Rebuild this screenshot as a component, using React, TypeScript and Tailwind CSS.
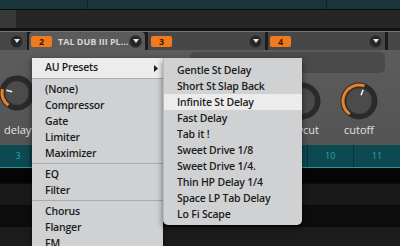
import React from "react";

const menuFont = { fontFamily: '"Open Sans", "DejaVu Sans", sans-serif' };

function DropCircle() {
  return (
    <div className="w-[11px] h-[11px] shrink-0 rounded-full bg-[#262626] flex items-center justify-center shadow-[0_0_0_1px_#3c3c3c]">
      <svg width="6" height="4" viewBox="0 0 6 4">
        <path d="M0 0 L6 0 L3 4 Z" fill="#e8e8e8" />
      </svg>
    </div>
  );
}

function Badge({ n }: { n: string }) {
  return (
    <div className="w-[21px] h-[11px] shrink-0 rounded-[2px] bg-[#f27a1c] flex items-center justify-center text-[9px] font-bold text-[#3b1800] leading-none">
      {n}
    </div>
  );
}

function Knob({
  size,
  arcFrom,
  arcTo,
  pointer,
}: {
  size: number;
  arcFrom: number;
  arcTo: number;
  pointer: number;
}) {
  const c = size / 2;
  const r = c - 3;
  const pt = (a: number, rr: number) => {
    const rad = ((a - 90) * Math.PI) / 180;
    return [c + rr * Math.cos(rad), c + rr * Math.sin(rad)];
  };
  const [x1, y1] = pt(arcFrom, r);
  const [x2, y2] = pt(arcTo, r);
  const large = (arcTo - arcFrom + 360) % 360 > 180 ? 1 : 0;
  const [px1, py1] = pt(pointer, r - 10);
  const [px2, py2] = pt(pointer, r - 4);
  return (
    <svg width={size} height={size} viewBox={`0 0 ${size} ${size}`}>
      <circle cx={c} cy={c} r={c - 0.5} fill="#2a2a2a" />
      <circle cx={c} cy={c} r={r - 3} fill="#4b4b4b" />
      <circle cx={c} cy={c} r={r - 3} fill="none" stroke="#3a3a3a" strokeWidth="1" />
      <path
        d={`M${x1} ${y1} A${r} ${r} 0 ${large} 1 ${x2} ${y2}`}
        fill="none"
        stroke="#e8822a"
        strokeWidth="3"
      />
      <line x1={px1} y1={py1} x2={px2} y2={py2} stroke="#f2f2f2" strokeWidth="1.5" />
    </svg>
  );
}

const mainItems: (string | null)[] = [
  "(None)",
  "Compressor",
  "Gate",
  "Limiter",
  "Maximizer",
  null,
  "EQ",
  "Filter",
  null,
  "Chorus",
  "Flanger",
  "FM",
];

const presets = [
  "Gentle St Delay",
  "Short St Slap Back",
  "Infinite St Delay",
  "Fast Delay",
  "Tab it !",
  "Sweet Drive 1/8",
  "Sweet Drive 1/4.",
  "Thin HP Delay 1/4",
  "Space LP Tab Delay",
  "Lo Fi Scape",
];

export default function App() {
  return (
    <div
      className="relative w-[400px] h-[246px] overflow-hidden bg-[#0a0a0a] flex flex-col"
      style={{ fontFamily: '"Open Sans", "Liberation Sans", sans-serif' }}
    >
      {/* top teal strip */}
      <div className="h-[9px] flex bg-[#17353a]">
        <div className="w-[88px] border-r border-[#0f2428]" />
        <div className="w-[239px] border-r border-[#0f2428]" />
        <div className="flex-1" />
      </div>
      <div className="h-[1px] bg-[#0b0b0b]" />
      <div className="h-[18px] flex">
        <div className="w-[16px] bg-[#383838]" />
        <div className="flex-1 bg-[#272625]" />
      </div>
      <div className="h-[3px] bg-[#111]" />
      <div className="h-[1px] bg-[#747474]" />

      {/* slot tabs */}
      <div className="h-[18px] flex bg-[#1b1b1b]">
        <div className="w-[27px] bg-[#474747] flex items-center justify-end pr-[5px]">
          <DropCircle />
        </div>
        <div className="w-[2px]" />
        <div className="w-[116px] bg-[#5b5b5b] rounded-t-[4px] flex items-center pl-[2px] pr-[4px]">
          <Badge n="2" />
          <span className="ml-[6px] text-[9px] font-bold text-[#d6d6d6] whitespace-nowrap flex-1 leading-none">
            TAL DUB III PL...
          </span>
          <DropCircle />
        </div>
        <div className="w-[3px]" />
        <div className="w-[117px] bg-[#474747] flex items-center pl-[3px] pr-[4px] justify-between">
          <Badge n="3" />
          <DropCircle />
        </div>
        <div className="w-[3px]" />
        <div className="w-[117px] bg-[#474747] flex items-center pl-[2px] pr-[4px] justify-between">
          <Badge n="4" />
          <DropCircle />
        </div>
        <div className="w-[3px]" />
        <div className="flex-1 bg-[#474747]" />
      </div>

      {/* plugin panel */}
      <div className="h-[95px] bg-gradient-to-b from-[#5c5c5c] to-[#545454] relative">
        <div className="absolute left-[190px] top-[2px] w-[195px] h-[21px] rounded-[5px] bg-[#4a4a4a]" />
        <div className="absolute left-[-1px] top-[25px]">
          <Knob size={36} arcFrom={215} arcTo={285} pointer={285} />
        </div>
        <span className="absolute left-[4px] top-[74px] text-[11px] text-[#e2e2e2] leading-none whitespace-nowrap">
          delaytime
        </span>
        <div className="absolute left-[283px] top-[32px] flex flex-col items-center w-[38px]">
          <Knob size={38} arcFrom={215} arcTo={330} pointer={330} />
          <span className="text-[11px] text-[#e2e2e2] mt-[4px] leading-none">lowcut</span>
        </div>
        <div className="absolute left-[340px] top-[32px] flex flex-col items-center w-[38px]">
          <Knob size={38} arcFrom={215} arcTo={20} pointer={20} />
          <span className="text-[11px] text-[#e2e2e2] mt-[4px] leading-none">cutoff</span>
        </div>
      </div>

      {/* teal timeline */}
      <div className="h-[22px] flex bg-[#0d4950] text-[9px] text-[#33a3ab]">
        <div className="w-[31px] border-r border-[#083338] flex items-center justify-end pr-[9px]">3</div>
        {[4, 5, 6, 7, 8, 9].map((n) => (
          <div key={n} className="w-[47px] border-r border-[#083338]" />
        ))}
        <div className="w-[47px] border-r border-[#083338] flex items-center justify-center">10</div>
        <div className="w-[47px] flex items-center justify-center">11</div>
      </div>
      <div className="h-[1px] bg-[#2b9aa0]" />
      <div className="h-[15px] bg-[#050505]" />
      <div className="h-[22px] bg-[#191919] border-t border-[#0c0c0c]" />
      <div className="h-[22px] bg-[#0c0c0c]" />
      <div className="flex-1 bg-[#1c1c1c]" />

      {/* main popup menu */}
      <div
        className="absolute left-[32px] top-[58px] w-[131px] h-[200px] bg-[#d0d1d3] shadow-[0_2px_6px_rgba(0,0,0,0.55)] text-[10.5px] tracking-[-0.2px] font-semibold text-[#1c1c1c]"
        style={menuFont}
      >
        <div className="h-[20px] bg-[#ececec] flex items-center pl-[13px] pr-[5px]">
          <span className="flex-1">AU Presets</span>
          <svg width="4" height="7" viewBox="0 0 4 7">
            <path d="M0 0 L4 3.5 L0 7 Z" fill="#1c1c1c" />
          </svg>
        </div>
        <div className="h-[1px] bg-[#a9aaac]" />
        <div className="h-[2px]" />
        {mainItems.map((it, i) =>
          it === null ? (
            <div key={i} className="py-[2px]">
              <div className="h-[1px] bg-[#a9aaac]" />
            </div>
          ) : (
            <div key={i} className="h-[16px] flex items-center pl-[13px] leading-none">
              {it}
            </div>
          )
        )}
      </div>

      {/* submenu */}
      <div
        className="absolute left-[163px] top-[58px] w-[139px] pt-[4px] pb-[3px] bg-[#d0d1d3] rounded-b-[5px] shadow-[0_3px_6px_rgba(0,0,0,0.55)] border-l border-[#b9babc] text-[10.5px] tracking-[-0.2px] font-semibold text-[#1c1c1c]"
        style={menuFont}
      >
        {presets.map((p, i) => (
          <div
            key={p}
            className={`h-[16px] flex items-center pl-[13px] leading-none ${
              i === 2 ? "bg-[#ececec]" : ""
            }`}
          >
            {p}
          </div>
        ))}
      </div>
    </div>
  );
}
